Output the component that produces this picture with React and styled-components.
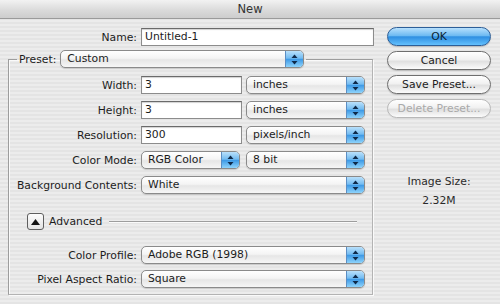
import React from 'react';
import styled, { createGlobalStyle } from 'styled-components';

const GlobalStyle = createGlobalStyle`
  html, body {
    margin: 0;
    padding: 0;
    background: #e9e9e9;
  }
  body {
    font-family: "DejaVu Sans", "Liberation Sans", sans-serif;
    font-size: 10.8px;
    color: #1c1c1c;
  }
`;

const Window = styled.div`
  width: 500px;
  height: 304px;
  overflow: hidden;
  background: repeating-linear-gradient(#ececec 0px, #ececec 2px, #e4e4e4 2px, #e4e4e4 4px);
  box-sizing: border-box;
`;

const TitleBar = styled.div`
  height: 18px;
  line-height: 18px;
  text-align: center;
  font-size: 11.5px;
  color: #333;
  background: linear-gradient(#f2f2f2, #d9d9d9 60%, #cdcdcd);
  border-bottom: 1px solid #9a9a9a;
`;

const Body = styled.div`
  display: flex;
  gap: 13px;
  padding: 9px 9px 0 8px;
`;

const LeftColumn = styled.div`
  width: 366px;
  display: flex;
  flex-direction: column;
`;

const NameRow = styled.div`
  display: grid;
  grid-template-columns: 129px 233px;
  column-gap: 4px;
  align-items: center;
  height: 18px;
  margin-bottom: 4px;
`;

const Label = styled.span`
  text-align: right;
  white-space: nowrap;
`;

const TextInput = styled.div`
  height: 18px;
  box-sizing: border-box;
  width: ${p => p.$w || 'auto'};
  background: #fff;
  border: 1px solid #8c8c8c;
  border-top-color: #6a6a6a;
  box-shadow: inset 0 1px 1px rgba(0, 0, 0, 0.18);
  padding: 0 3px;
  line-height: 16px;
`;

const Group = styled.fieldset`
  margin: 0 1px 0 0;
  padding: 8px 7px 6px 0;
  border: 1px solid #9d9d9d;
  border-right-color: #b3b3b3;
  border-bottom-color: #b3b3b3;
  box-shadow: 1px 1px 0 #fafafa, inset 1px 1px 0 #fafafa;
  min-width: 0;
`;

const Legend = styled.legend`
  display: flex;
  align-items: center;
  gap: 4px;
  margin-left: 8px;
  padding: 0 2px;
`;

const Rows = styled.div`
  display: grid;
  grid-template-columns: 128px 224px;
  column-gap: 4px;
  row-gap: 7px;
  align-items: center;
`;

const FieldPair = styled.div`
  display: flex;
  justify-content: space-between;
  align-items: center;
`;

const PopupBox = styled.div`
  width: ${p => p.$w || 'auto'};
  height: 18px;
  box-sizing: border-box;
  display: flex;
  align-items: stretch;
  border: 1px solid #8a8a8a;
  border-radius: 5px;
  background: linear-gradient(#ffffff, #f4f4f4 45%, #e6e6e6 55%, #f6f6f6);
  box-shadow: 0 1px 1px rgba(0, 0, 0, 0.15);
  overflow: hidden;
`;

const PopupText = styled.span`
  flex: 1;
  padding-left: 6px;
  line-height: 16px;
  white-space: nowrap;
`;

const PopupArrows = styled.span`
  width: 17px;
  display: flex;
  align-items: center;
  justify-content: center;
  border-left: 1px solid #5b8ec4;
  background: linear-gradient(#b9e0fb, #74bcf1 45%, #3e9ae6 52%, #8ed3fb);
`;

const Popup = ({ w, children }) => (
  <PopupBox $w={w}>
    <PopupText>{children}</PopupText>
    <PopupArrows>
      <svg width="7" height="11" viewBox="0 0 7 11">
        <path d="M3.5 0.5 L6.5 4 L0.5 4 Z" fill="#0f2a4a" />
        <path d="M3.5 10.5 L6.5 7 L0.5 7 Z" fill="#0f2a4a" />
      </svg>
    </PopupArrows>
  </PopupBox>
);

const AdvancedRow = styled.div`
  display: flex;
  align-items: center;
  gap: 5px;
  margin: 19px 0 16px 18px;
`;

const Disclosure = styled.div`
  width: 17px;
  height: 17px;
  box-sizing: border-box;
  border: 1px solid #5e5e5e;
  border-radius: 3px;
  background: linear-gradient(#fdfdfd, #e2e2e2);
  display: flex;
  align-items: center;
  justify-content: center;
`;

const Rule = styled.div`
  flex: 1;
  margin: 0 8px 0 2px;
  height: 1px;
  background: #9d9d9d;
  box-shadow: 0 1px 0 #fafafa;
`;

const AdvancedRows = styled(Rows)`
  row-gap: 6px;
`;

const RightColumn = styled.div`
  width: 104px;
  display: flex;
  flex-direction: column;
  gap: 5px;
  margin-top: -1px;
`;

const Button = styled.div`
  height: 19px;
  box-sizing: border-box;
  border-radius: 10px;
  border: 1px solid ${p => (p.$primary ? '#2c5e98' : p.$disabled ? '#b8b8b8' : '#6e6e6e')};
  background: ${p =>
    p.$primary
      ? 'linear-gradient(#b7e0fd, #6dbaf2 45%, #2f8fe2 52%, #63c0fd)'
      : 'linear-gradient(#ffffff, #f1f1f1 45%, #e0e0e0 55%, #fbfbfb)'};
  color: ${p => (p.$disabled ? '#a9a9a9' : p.$primary ? '#0d1f33' : '#1c1c1c')};
  text-align: center;
  line-height: 17px;
  box-shadow: 0 1px 1px rgba(0, 0, 0, ${p => (p.$disabled ? 0.05 : 0.18)});
`;

const SizeInfo = styled.div`
  margin-top: 52px;
  display: flex;
  flex-direction: column;
  align-items: center;
  gap: 6px;
  color: #2a2a2a;
`;

export default function App() {
  return (
    <Window>
      <GlobalStyle />
      <TitleBar>New</TitleBar>
      <Body>
        <LeftColumn>
          <NameRow>
            <Label>Name:</Label>
            <TextInput>Untitled-1</TextInput>
          </NameRow>
          <Group>
            <Legend>
              <span>Preset:</span>
              <Popup w="244px">Custom</Popup>
            </Legend>
            <Rows>
              <Label>Width:</Label>
              <FieldPair>
                <TextInput $w="101px">3</TextInput>
                <Popup w="119px">inches</Popup>
              </FieldPair>
              <Label>Height:</Label>
              <FieldPair>
                <TextInput $w="101px">3</TextInput>
                <Popup w="119px">inches</Popup>
              </FieldPair>
              <Label>Resolution:</Label>
              <FieldPair>
                <TextInput $w="101px">300</TextInput>
                <Popup w="119px">pixels/inch</Popup>
              </FieldPair>
              <Label>Color Mode:</Label>
              <FieldPair>
                <Popup w="99px">RGB Color</Popup>
                <Popup w="119px">8 bit</Popup>
              </FieldPair>
              <Label>Background Contents:</Label>
              <Popup>White</Popup>
            </Rows>
            <AdvancedRow>
              <Disclosure>
                <svg width="9" height="6" viewBox="0 0 9 6">
                  <path d="M4.5 0 L9 6 L0 6 Z" fill="#111" />
                </svg>
              </Disclosure>
              <span>Advanced</span>
              <Rule />
            </AdvancedRow>
            <AdvancedRows>
              <Label>Color Profile:</Label>
              <Popup>Adobe RGB (1998)</Popup>
              <Label>Pixel Aspect Ratio:</Label>
              <Popup>Square</Popup>
            </AdvancedRows>
          </Group>
        </LeftColumn>
        <RightColumn>
          <Button $primary>OK</Button>
          <Button>Cancel</Button>
          <Button>Save Preset...</Button>
          <Button $disabled>Delete Preset...</Button>
          <SizeInfo>
            <span>Image Size:</span>
            <span>2.32M</span>
          </SizeInfo>
        </RightColumn>
      </Body>
    </Window>
  );
}
